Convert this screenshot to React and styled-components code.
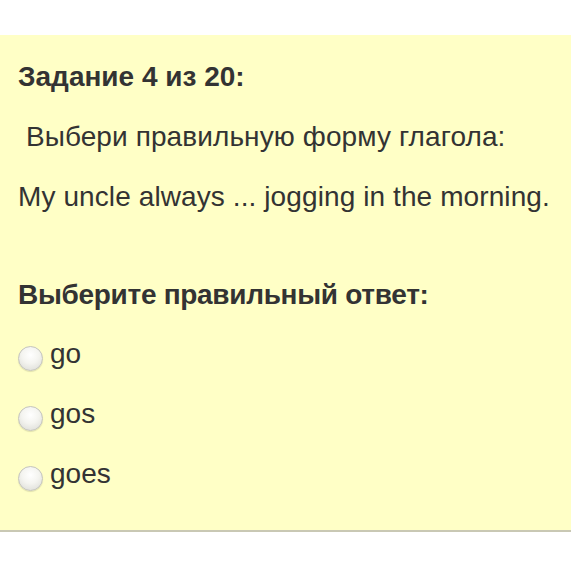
import React from "react";
import styled, { createGlobalStyle } from "styled-components";

const Global = createGlobalStyle`
	body {
		margin: 0;
		background: #ffffff;
		font-family: "Liberation Sans", Arial, sans-serif;
		color: #333333;
	}
`;

const Page = styled.div`
	padding-top: 35px;
`;

const Task = styled.div`
	background: #ffffc6;
	border-bottom: 2px solid #c9c8b4;
	box-shadow: 0 3px 4px rgba(0, 0, 0, 0.06);
	padding: 18px 18px 0 18px;
	height: 497px;
	box-sizing: border-box;
	font-size: 28px;
`;

const Title = styled.div`
	font-weight: bold;
	line-height: 60px;
	height: 60px;
	margin-top: -6px;
	letter-spacing: ${(p) => (p.$tight ? "-0.3px" : "0")};
`;

const Line = styled.div`
	line-height: 60px;
	height: 60px;
	white-space: nowrap;
	letter-spacing: 0.1px;
`;

const Spacer = styled.div`
	height: 44px;
`;

const Options = styled.div`
	display: flex;
	flex-direction: column;
	margin-top: 2px;
`;

const Option = styled.label`
	display: flex;
	align-items: center;
	gap: 7px;
	height: 60px;
`;

const Radio = styled.span`
	width: 25px;
	height: 25px;
	flex: none;
	border-radius: 50%;
	box-sizing: border-box;
	border: 1px solid #c4c4be;
	background: radial-gradient(circle at 50% 35%, #ffffff 0%, #f4f4f0 45%, #d8d8d2 100%);
	box-shadow: 0 1px 1px rgba(0, 0, 0, 0.12);
	margin-top: 2px;
`;

const OptionText = styled.span`
	line-height: 1;
	margin-top: -6px;
`;

const answers = ["go", "gos", "goes"];

const App = () => {
	return (
		<Page>
			<Global />
			<Task>
				<Title>Задание 4 из 20:</Title>
				<Line>&nbsp;Выбери правильную форму глагола:</Line>
				<Line>My uncle always ... jogging in the morning.</Line>
				<Spacer />
				<Title $tight>Выберите правильный ответ:</Title>
				<Options>
					{answers.map((a) => (
						<Option key={a}>
							<Radio />
							<OptionText>{a}</OptionText>
						</Option>
					))}
				</Options>
			</Task>
		</Page>
	);
};

export default App;
